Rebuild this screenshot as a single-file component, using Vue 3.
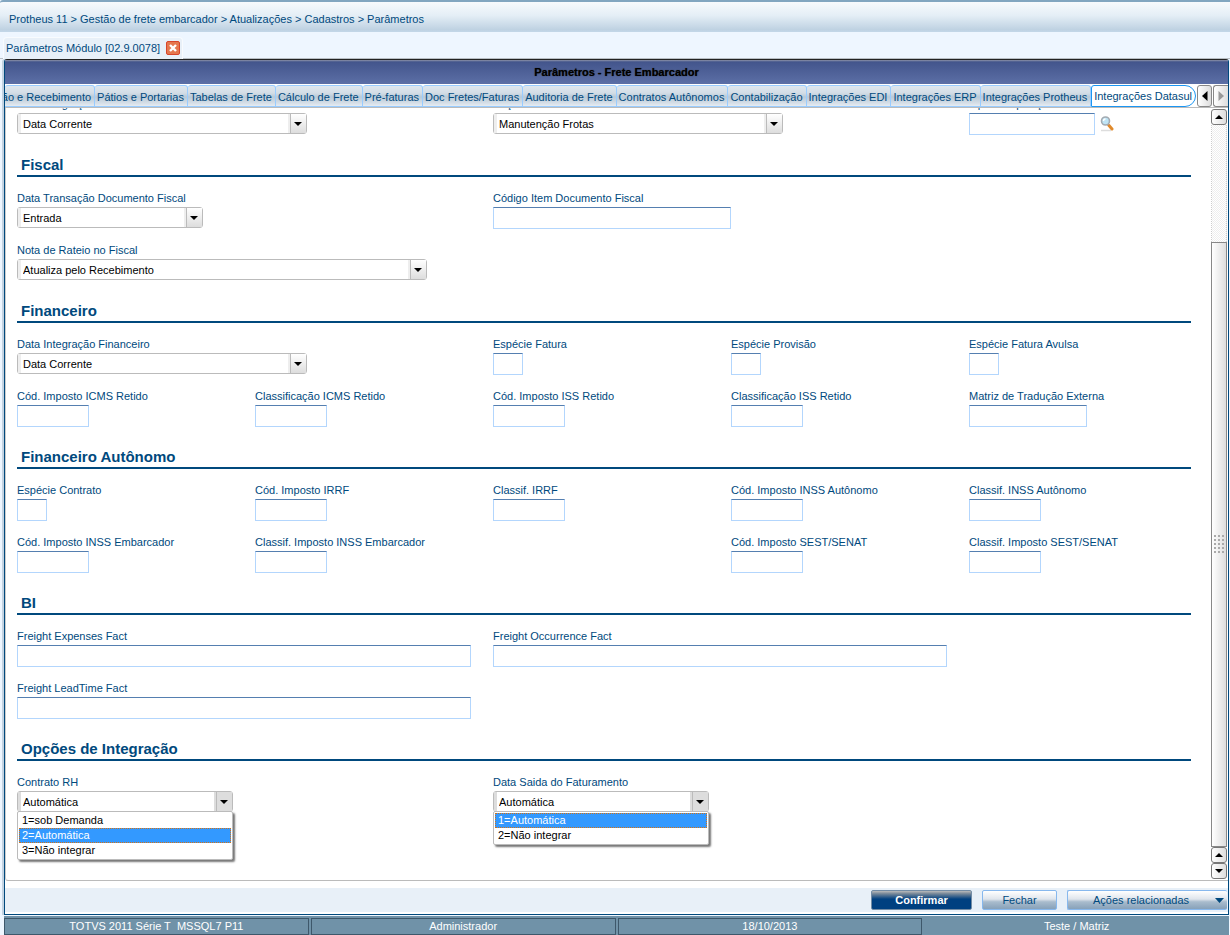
<script setup>
const tabs = ['Pátios e Portarias', 'Tabelas de Frete', 'Cálculo de Frete', 'Pré-faturas', 'Doc Fretes/Faturas', 'Auditoria de Frete', 'Contratos Autônomos', 'Contabilização', 'Integrações EDI', 'Integrações ERP', 'Integrações Protheus']

const text = (col, label, size, extra = {}) => ({ kind: 'text', col, label, size, ...extra })
const pick = (col, label, size, value, extra = {}) => ({ kind: 'pick', col, label, size, value, ...extra })

const sections = [
  { title: '', rows: [[pick(1, 'Data Integração', 'w290', 'Data Corrente'), pick(3, 'Seção', 'w290', 'Manutenção Frotas'), text(5, 'Tipo Composição', 'w126', { lookup: true })]] },
  { title: 'Fiscal', rows: [
    [pick(1, 'Data Transação Documento Fiscal', 'w186', 'Entrada'), text(3, 'Código Item Documento Fiscal', 'w238')],
    [pick(1, 'Nota de Rateio no Fiscal', 'w410', 'Atualiza pelo Recebimento')],
  ] },
  { title: 'Financeiro', rows: [
    [pick(1, 'Data Integração Financeiro', 'w290', 'Data Corrente'), text(3, 'Espécie Fatura', 'w30'), text(4, 'Espécie Provisão', 'w30'), text(5, 'Espécie Fatura Avulsa', 'w30')],
    [text(1, 'Cód. Imposto ICMS Retido', 'w72'), text(2, 'Classificação ICMS Retido', 'w72'), text(3, 'Cód. Imposto ISS Retido', 'w72'), text(4, 'Classificação ISS Retido', 'w72'), text(5, 'Matriz de Tradução Externa', 'w118')],
  ] },
  { title: 'Financeiro Autônomo', rows: [
    [text(1, 'Espécie Contrato', 'w30'), text(2, 'Cód. Imposto IRRF', 'w72'), text(3, 'Classif. IRRF', 'w72'), text(4, 'Cód. Imposto INSS Autônomo', 'w72'), text(5, 'Classif. INSS Autônomo', 'w72')],
    [text(1, 'Cód. Imposto INSS Embarcador', 'w72'), text(2, 'Classif. Imposto INSS Embarcador', 'w72'), text(4, 'Cód. Imposto SEST/SENAT', 'w72'), text(5, 'Classif. Imposto SEST/SENAT', 'w72')],
  ] },
  { title: 'BI', rows: [
    [text(1, 'Freight Expenses Fact', 'w454'), text(3, 'Freight Occurrence Fact', 'w454')],
    [text(1, 'Freight LeadTime Fact', 'w454')],
  ] },
  { title: 'Opções de Integração', rows: [
    [
      pick(1, 'Contrato RH', 'w216', 'Automática', { options: ['1=sob Demanda', '2=Automática', '3=Não integrar'], active: 1 }),
      pick(3, 'Data Saida do Faturamento', 'w216', 'Automática', { options: ['1=Automática', '2=Não integrar'], active: 0 }),
    ],
  ] },
]
const fieldId = (s, r, f) => `f-${s}-${r}-${f.col}`
</script>

<template>
  <div class="app">
    <nav class="crumbs">Protheus 11 &gt; Gestão de frete embarcador &gt; Atualizações &gt; Cadastros &gt; Parâmetros</nav>
    <div class="docs">
      <div class="doc">
        <span>Parâmetros Módulo [02.9.0078]</span>
        <button class="close" aria-label="Fechar aba">
          <svg viewBox="0 0 12 12" width="12" height="12"><path d="M3 3l6 6M9 3l-6 6" stroke="#fff" stroke-width="2.4" /></svg>
        </button>
      </div>
    </div>

    <main class="window">
      <h1 class="title">Parâmetros - Frete Embarcador</h1>
      <div class="tabs">
        <button class="tab first"><span>Programação e Recebimento</span></button>
        <button v-for="t in tabs" :key="t" class="tab">{{ t }}</button>
        <button class="tab current">Integrações Datasul</button>
        <button class="nav" aria-label="Abas anteriores"><svg width="6" height="10" viewBox="0 0 6 10"><path d="M5.5 0v10L0 5z" fill="#000" /></svg></button>
        <button class="nav last" aria-label="Próximas abas"><svg width="6" height="10" viewBox="0 0 6 10"><path d="M.5 0v10L6 5z" fill="#999" /></svg></button>
      </div>

      <div class="body">
        <form class="form" @submit.prevent>
          <section v-for="(s, si) in sections" :key="si" :class="{ cut: !s.title }">
            <h2 v-if="s.title">{{ s.title }}</h2>
            <div v-for="(row, ri) in s.rows" :key="ri" class="row">
              <div v-for="f in row" :key="f.label" class="field" :class="'c' + f.col">
                <label :for="fieldId(si, ri, f)">{{ f.label }}</label>
                <div v-if="f.kind === 'text'" class="line">
                  <input :id="fieldId(si, ri, f)" type="text" :class="f.size" />
                  <button v-if="f.lookup" class="lookup" aria-label="Pesquisar">
                    <svg width="14" height="16" viewBox="0 0 14 16">
                      <path d="M1 14.5h10" stroke="#ddd" stroke-width="1.5" />
                      <path d="M8 8.500l1 1" stroke="#8b9299" stroke-width="2" />
                      <path d="M9 9.500l3 3.500" stroke="#e08a2c" stroke-width="3" stroke-linecap="round" />
                      <circle cx="5.500" cy="5" r="4" fill="#bfe4f5" stroke="#a3abb2" stroke-width="1.600" />
                      <path d="M3.500 5a2 2 0 0 1 2-2" stroke="#fff" stroke-width="1.400" fill="none" />
                    </svg>
                  </button>
                </div>
                <div v-else class="combo" :class="[f.size, { open: f.options }]">
                  <select :id="fieldId(si, ri, f)"><option>{{ f.value }}</option></select>
                  <span class="drop"><svg width="8" height="4" viewBox="0 0 8 4"><path d="M0 0h8L4 4z" fill="#000" /></svg></span>
                  <ul v-if="f.options" class="menu">
                    <li v-for="(o, i) in f.options" :key="o" :class="{ on: i === f.active }">{{ o }}</li>
                  </ul>
                </div>
              </div>
            </div>
          </section>
        </form>
        <div class="scroll">
          <button class="sb" aria-label="Subir"><svg width="8" height="4" viewBox="0 0 8 4"><path d="M0 4h8L4 0z" fill="#000" /></svg></button>
          <div class="track"></div>
          <div class="thumb"><i></i></div>
          <button class="sb" aria-label="Subir uma linha"><svg width="8" height="4" viewBox="0 0 8 4"><path d="M0 4h8L4 0z" fill="#000" /></svg></button>
          <button class="sb" aria-label="Descer"><svg width="8" height="4" viewBox="0 0 8 4"><path d="M0 0h8L4 4z" fill="#000" /></svg></button>
        </div>
      </div>

      <div class="actions">
        <button class="btn primary">Confirmar</button>
        <button class="btn close-btn">Fechar</button>
        <button class="btn more"><span>Ações relacionadas</span><svg width="9" height="5" viewBox="0 0 9 5"><path d="M0 0h9L4.500 5z" fill="#00497d" /></svg></button>
      </div>
    </main>

    <footer class="status">
      <span>TOTVS 2011 Série T&nbsp; MSSQL7 P11</span>
      <span>Administrador</span>
      <span>18/10/2013</span>
      <span class="plain">Teste / Matriz</span>
    </footer>
  </div>
</template>

<style>
html, body { margin: 0; background: #eef6ff; }
</style>

<style scoped>
* { box-sizing: border-box; }
.app { min-height: 100vh; display: flex; flex-direction: column; font: 11px/16px "Liberation Sans", Arial, sans-serif; color: #00497d; background: #eef6ff; overflow: hidden; }
button, input, select { font: inherit; color: inherit; margin: 0; padding: 0; }
button { cursor: pointer; }
.crumbs { height: 32px; border-top: 2px solid #82a6c0; border-top-left-radius: 3px; padding: 9px 9px 0; background: linear-gradient(#f7fafd, #e4eef6 45%, #bfd2e2 92%, #c3d7e8); line-height: 16px; }
.docs { height: 27px; padding: 5px 0 0 3px; border-bottom: 1px solid #b8bec4; background: #eef6ff; }
.doc { width: 180px; height: 22px; padding: 0 0 1px 2px; display: flex; align-items: center; gap: 6px; background: #e8f0f8; border: 1px solid #f8fbfe; border-bottom: 0; border-radius: 4px 4px 0 0; white-space: nowrap; }
.close { width: 14px; height: 14px; border: 1px solid #d8452a; border-radius: 2px; background: #e5774e; display: grid; place-items: center; }
.window { flex: 1; display: flex; flex-direction: column; margin: 0 1px 0 4px; border: 1px solid #00497d; border-top-color: #222; border-radius: 3px 3px 0 0; background: #fff; box-shadow: -2px 0 0 #c3d3e2; }
.title { margin: 0; height: 24px; padding-top: 4px; font-size: 11px; line-height: 16px; text-align: center; color: #000; background: linear-gradient(#8e93a8, #43558c 8%, #5c6fa6); text-shadow: 0 0 1px #222; }
.tabs { display: flex; height: 24px; padding-top: 1px; border-bottom: 1px solid #bbb; }
.tab { flex: 0 0 auto; height: 22px; padding: 1px 3px 0 2px; border: 1px solid #99ccff; border-width: 1px 1px 1px 0; border-radius: 3px 3px 0 0; background: linear-gradient(#dfe7ee, #d3dde6 35%, #b8c9d8 55%, #d5dee7 85%, #e6ecf2); white-space: nowrap; }
.tab.first { flex: 1 1 0; min-width: 0; overflow: hidden; display: flex; align-items: center; justify-content: flex-end; padding-left: 0; }
.tab.current { padding: 0 3px 0 2px; background: #fff; border: 1px solid #1b96f3; border-radius: 3px 11px 11px 0; }
.nav { flex: none; width: 15px; border: 1px solid #888; border-radius: 3px; background: linear-gradient(90deg, #fff, #ddd); display: grid; place-items: center; margin-left: 1px; }
.nav.last { border-right: 0; border-radius: 3px 0 0 3px; }
.body { flex: 1; display: flex; overflow: hidden; border-bottom: 1px solid #bbb; border-left: 1px solid #ccc; border-bottom-left-radius: 3px; }
.form { flex: 1; min-width: 0; padding: 0 4px 0 11px; }
section.cut { margin-top: -11px; }
h2 { margin: 0 16px 14px 0; height: 28px; padding: 8px 4px 0; border-bottom: 2px solid #00497d; font-size: 15px; line-height: 16px; }
.row { display: grid; grid-template-columns: repeat(5, 1fr); height: 52px; align-items: start; }
.field { min-width: 0; white-space: nowrap; }
.c1 { grid-column: 1; } .c2 { grid-column: 2; } .c3 { grid-column: 3; } .c4 { grid-column: 4; } .c5 { grid-column: 5; }
label { display: block; height: 16px; line-height: 14px; }
.line { display: flex; gap: 5px; }
input { flex: none; height: 22px; border: 1px solid #b3d6fd; border-top-color: #557fb0; border-radius: 0; background: #fff; outline: 0; padding: 0 4px; }
.lookup { border: 0; background: none; height: 20px; padding-top: 3px; }
.combo { position: relative; height: 21px; border: 1px solid #bbb; border-radius: 3px; display: flex; background: #fff; color: #000; }
.combo select { flex: 1; min-width: 0; appearance: none; border: 0; border-left: 3px solid #eee; border-right: 2px solid #eee; background: #fff; padding: 0 2px; outline: 0; }
.drop { flex: none; width: 16px; padding-right: 1px; border-left: 1px solid #bbb; background: linear-gradient(#fff, #ddd); display: grid; place-items: center; pointer-events: none; }
.open select { border-color: #ddd; }
.open .drop { background: #ddd; }
.menu { position: absolute; left: -1px; right: -1px; top: 19px; margin: 0; padding: 1px; list-style: none; background: #fff; border: 1px solid #bbb; border-radius: 2px; box-shadow: 2px 2px 2px #777; line-height: 13px; }
.menu li { height: 15px; padding: 0 2px; border: 1px solid transparent; }
.menu li.on { background: #3399ff; color: #fff; border: 1px dotted #d47215; }
.w30 { width: 30px; } .w72 { width: 72px; } .w118 { width: 118px; } .w126 { width: 126px; } .w186 { width: 186px; }
.w216 { width: 216px; } .w238 { width: 238px; } .w290 { width: 290px; } .w410 { width: 410px; } .w454 { width: 454px; }
.scroll { flex: none; width: 17px; padding: 1px 1px 1px 0; display: flex; flex-direction: column; }
.sb { height: 16px; flex: none; border: 1px solid #777; border-radius: 3px; background: linear-gradient(90deg, #fff, #ddd); display: grid; place-items: center; }
.track { flex: 117; border: 1px dotted #ccc; border-width: 0 1px; background: repeating-conic-gradient(#eee 0 25%, #fff 0 50%) 0 0 / 2px 2px; }
.thumb { flex: 605; border: 1px solid #888; background: linear-gradient(90deg, #fff, #ddd); display: grid; place-items: center; }
.thumb i { width: 12px; height: 20px; background: radial-gradient(circle, #aaa 1px, transparent 1px) 0 0 / 4px 4px; }
.actions { height: 24px; margin: 7px 0 2px; padding: 2px 1px 0 0; display: flex; justify-content: flex-end; background: #e8f0f8; }
.btn { height: 20px; border: 1px solid #87b8ed; border-radius: 2px; background: linear-gradient(#fff, #dfe5ec 45%, #a9bccd 60%, #87a1b9); }
.primary { width: 101px; margin-right: 10px; color: #fff; font-weight: bold; border: 1px solid #738ca5; background: linear-gradient(#bbb, #789 15%, #004080 45%, #004080); }
.close-btn { width: 75px; margin-right: 10px; }
.more { width: 160px; padding: 0 3px 0 25px; display: flex; justify-content: space-between; align-items: center; border-right: 0; }
.status { height: 19px; flex: none; margin: 1px 1px 0 4px; padding-top: 2px; display: grid; grid-template-columns: repeat(4, 1fr); gap: 2px; background: #7092a8; color: #fff; text-align: center; }
.status span { border: 1px solid #3e586b; line-height: 15px; }
.status .plain { border-color: transparent; }
</style>
